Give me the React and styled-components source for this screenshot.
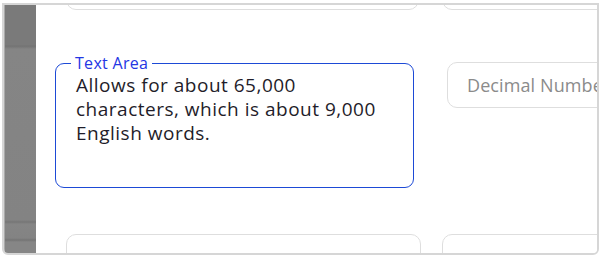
import React from 'react';
import styled, { createGlobalStyle } from 'styled-components';

const GlobalStyle = createGlobalStyle`
  html, body {
    margin: 0;
    padding: 0;
    background: #ffffff;
  }
  body {
    font-family: "Open Sans", "Noto Sans", sans-serif;
  }
`;

const Screen = styled.div`
  width: 603px;
  height: 258px;
  padding: 3px 4px 3px 2px;
  box-sizing: border-box;
  background: #ffffff;
`;

const Window = styled.div`
  display: flex;
  height: 100%;
  border: 2px solid #d6d6d6;
  border-radius: 0 0 6px 6px;
  overflow: hidden;
  box-sizing: border-box;
`;

const Sidebar = styled.div`
  flex: 0 0 31px;
  border-left: 1px solid #a9a9a9;
  background: linear-gradient(
    to bottom,
    #7a7a7a 0px,
    #7a7a7a 40px,
    #727272 41px,
    #858585 44px,
    #838383 215px,
    #767676 217px,
    #858585 219px,
    #838383 233px,
    #747474 235px,
    #868686 237px
  );
`;

const Content = styled.div`
  flex: 1;
  min-width: 0;
  display: flex;
  flex-direction: column;
  overflow: hidden;
  background: #ffffff;
`;

const Row = styled.div`
  display: grid;
  grid-template-columns: ${(p) => p.$first}px 240px;
  column-gap: ${(p) => p.$gap}px;
  align-items: start;
  padding-left: ${(p) => p.$inset}px;
  margin-top: ${(p) => p.$top}px;
`;

const Field = styled.div`
  height: 46px;
  border: 1px solid #dedede;
  border-radius: 10px;
  box-sizing: border-box;
  padding: 0 19px;
  display: flex;
  align-items: center;
  margin-top: ${(p) => p.$offset || 0}px;
  font-size: 18px;
  letter-spacing: 0.1px;
  color: #8b8b8b;
  white-space: nowrap;
  overflow: hidden;
`;

const PeekField = styled(Field)`
  align-items: flex-start;
  padding-top: 12px;
`;

const AreaBox = styled.fieldset`
  margin: 0;
  height: 133px;
  box-sizing: border-box;
  border: 1px solid #1d4ad6;
  border-radius: 9px;
  padding: 0 20px 0 20px;
`;

const AreaLabel = styled.legend`
  margin-left: -5px;
  padding: 0 4px;
  font-size: 16px;
  line-height: 16px;
  letter-spacing: 0.3px;
  color: #2436e4;
`;

const AreaText = styled.div`
  margin-top: 2px;
  font-size: 19px;
  line-height: 24px;
  letter-spacing: 0.5px;
  color: #1f1d2a;
`;

const App = () => {
  return (
    <Screen>
      <GlobalStyle />
      <Window>
        <Sidebar />
        <Content>
          <Row $first={353} $gap={23} $inset={30} $top={-41}>
            <Field />
            <Field />
          </Row>
          <Row $first={359} $gap={33} $inset={19} $top={45}>
            <AreaBox>
              <AreaLabel>Text Area</AreaLabel>
              <AreaText>
                Allows for about 65,000 characters, which is about 9,000 English words.
              </AreaText>
            </AreaBox>
            <Field $offset={7}>Decimal Number</Field>
          </Row>
          <Row $first={355} $gap={21} $inset={30} $top={46}>
            <PeekField>Percent</PeekField>
            <PeekField>Currency</PeekField>
          </Row>
        </Content>
      </Window>
    </Screen>
  );
};

export default App;
